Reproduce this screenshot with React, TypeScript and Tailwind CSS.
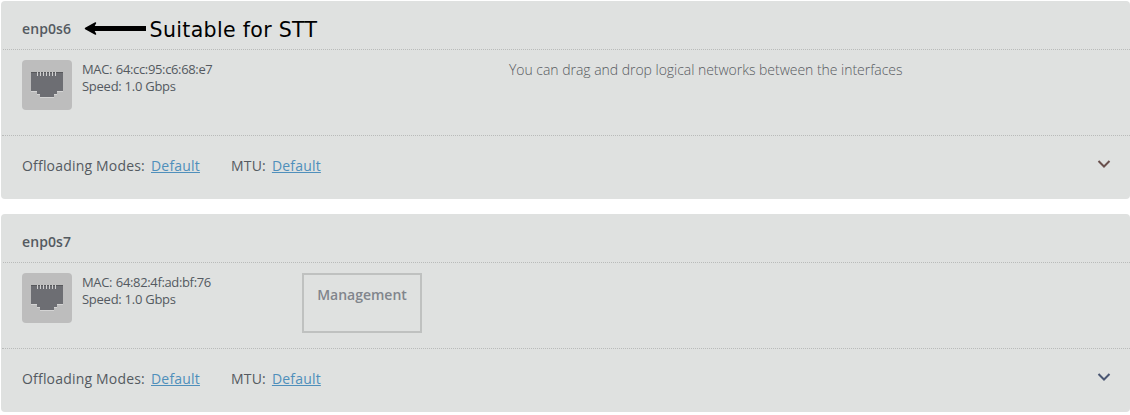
import React from "react";

function PortIcon() {
  return (
    <div className="h-[50px] w-[50px] shrink-0 rounded-[4px] bg-[#bdbdbd]">
      <svg width="50" height="50" viewBox="0 0 50 50" shapeRendering="crispEdges">
        <path d="M9 13h32v19h-6v3h-3v3H18v-3h-3v-3H9z" fill="#d4d4d4" />
        <path d="M9 12h32v19h-6v3h-3v3H18v-3h-3v-3H9z" fill="#6d6e73" />
        <path d="M9 12h32v1H9z" fill="#57585b" />
        {[15, 18, 21, 24, 27, 30, 33].map((x) => (
          <path key={x} d={`M${x} 12h1v4h-1z`} fill="#d0d0d0" />
        ))}
      </svg>
    </div>
  );
}

function Setting({ label }: { label: string }) {
  return (
    <div className="flex gap-[6px]">
      <span>{label}</span>
      <a className="text-[#4f8fbb] underline">Default</a>
    </div>
  );
}

type CardProps = { name: string; mac: string; note?: React.ReactNode; children: React.ReactNode; chevron: string };

function InterfaceCard({ name, mac, note, children, chevron }: CardProps) {
  return (
    <section className="h-[198px] rounded-[4px] bg-[#dfe1e0]">
      <header className="ml-[2px] flex h-[49px] items-center border-b border-dotted border-[#b9bbba] pt-[8px] pl-[19px] text-[14px] leading-[20px] font-semibold tracking-[0.1px]">
        <h2>{name}</h2>
        {note}
      </header>
      <div className="ml-[1px] flex h-[86px] border-b border-dotted border-[#b9bbba] pt-[10px] pl-[20px]">
        <PortIcon />
        <div className="ml-[10px] w-[220px] pt-[1px] text-[13px] leading-[17px]">
          <p className="tracking-[-0.35px] [word-spacing:0.7px]">MAC: {mac}</p>
          <p className="tracking-[-0.26px]">Speed: 1.0 Gbps</p>
        </div>
        <div className="flex-1">{children}</div>
      </div>
      <footer className="flex h-[60px] items-center pr-[19px] pl-[21px] text-[14px] leading-[20px] tracking-[0.19px]">
        <div className="flex gap-[31px]">
          <Setting label="Offloading Modes:" />
          <Setting label="MTU:" />
        </div>
        <svg className="-mt-[5px] ml-auto" width="14" height="10" viewBox="0 0 14 10" fill="none" stroke={chevron} strokeWidth="2">
          <path d="M1.5 2l5.5 5.5L12.5 2" />
        </svg>
      </footer>
    </section>
  );
}

function Note() {
  return (
    <div className="flex h-[20px] items-center">
      <svg className="ml-[12.5px]" width="63" height="16" viewBox="0 0 63 16">
        <path d="M8 7.5h54" stroke="#000" strokeWidth="5" />
        <path d="M1.5 7.5L11.5 2L8.5 7.5L11.5 13z" fill="#000" stroke="#000" strokeWidth="1.5" strokeLinejoin="round" />
      </svg>
      <span className="ml-[3px] pt-[2px] font-['DejaVu_Sans'] text-[20.5px] leading-[20px] font-normal tracking-[0.33px] whitespace-nowrap text-black">
        Suitable for STT
      </span>
    </div>
  );
}

export default function App() {
  return (
    <main className="flex h-[415px] flex-col gap-[15px] bg-white pt-[1px] pl-[1px] font-['Open_Sans',sans-serif] text-[#545a61]">
      <InterfaceCard name="enp0s6" mac="64:cc:95:c6:68:e7" note={<Note />} chevron="#69504d">
        <p className="pr-[20.5px] text-center text-[14px] leading-[20px] font-light tracking-[-0.03px] text-[#585b60]">
          You can drag and drop logical networks between the interfaces
        </p>
      </InterfaceCard>
      <InterfaceCard name="enp0s7" mac="64:82:4f:ad:bf:76" chevron="#4a5672">
        <div className="h-[60px] w-[120px] border-2 border-[#bfc1c0] pt-[10px] text-center text-[14px] leading-[20px] font-semibold text-[#81858c]">
          Management
        </div>
      </InterfaceCard>
    </main>
  );
}
